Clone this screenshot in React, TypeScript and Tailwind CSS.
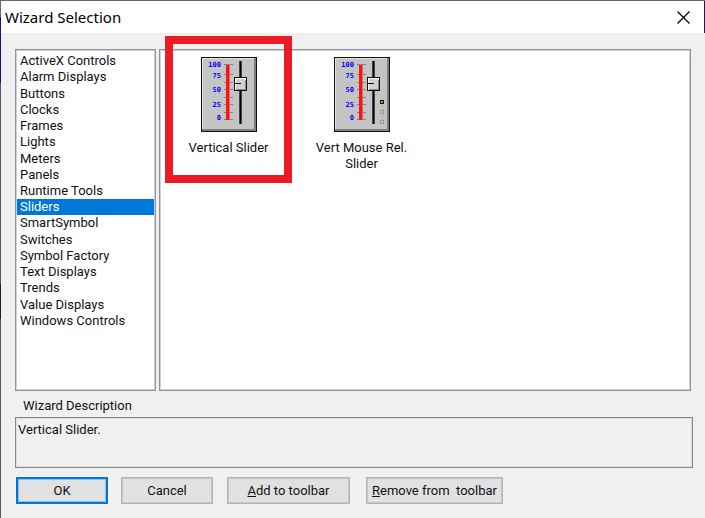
import React, { useState } from 'react';

const categories = [
    'ActiveX Controls',
    'Alarm Displays',
    'Buttons',
    'Clocks',
    'Frames',
    'Lights',
    'Meters',
    'Panels',
    'Runtime Tools',
    'Sliders',
    'SmartSymbol',
    'Switches',
    'Symbol Factory',
    'Text Displays',
    'Trends',
    'Value Displays',
    'Windows Controls',
];

const scale = [
    { value: '100', y: 10 },
    { value: '75', y: 21 },
    { value: '50', y: 35 },
    { value: '25', y: 50 },
    { value: '0', y: 63 },
];

const ticks = [7, 17, 25, 32, 40, 47, 55, 62];

function SliderIcon({ indicators = false }: { indicators?: boolean }) {
    return (
        <svg width="56" height="75" viewBox="0 0 56 75" shapeRendering="crispEdges" aria-hidden="true">
            <rect width="56" height="75" fill="#111" />
            <rect x="1" y="1" width="54" height="73" fill="#808080" />
            <rect x="1" y="1" width="52" height="71" fill="#e4e4e4" />
            <rect x="2" y="2" width="51" height="70" fill="#c4c4c4" />
            {ticks.map((y) => (
                <rect key={y} x="23" y={y} width="9" height="1" fill="#858585" />
            ))}
            <rect x="25" y="8" width="3" height="55" fill="#fa1410" />
            <rect x="28" y="8" width="1" height="55" fill="#dc6a66" />
            {scale.map(({ value, y }) => (
                <text
                    key={value}
                    x="20"
                    y={y}
                    textAnchor="end"
                    className="fill-[#0000ff] font-['DejaVu_Sans_Mono',monospace] text-[7px] font-bold"
                >
                    {value}
                </text>
            ))}
            <rect x="38" y="4" width="3" height="63" fill="#444" />
            <rect x="39" y="4" width="1" height="63" fill="#000" />
            <rect x="33" y="20" width="13" height="14" fill="#111" />
            <rect x="34" y="21" width="11" height="12" fill="#fafafa" />
            <rect x="35" y="23" width="10" height="10" fill="#8c8c8c" />
            <rect x="35" y="22" width="9" height="10" fill="#d0d0d0" />
            <rect x="34" y="26" width="6" height="1" fill="#111" />
            {indicators && (
                <g>
                    <path d="M48 44v22" stroke="#999" strokeDasharray="1 1" />
                    <rect x="46" y="43" width="4" height="4" fill="#111" />
                    <rect x="47" y="44" width="2" height="2" fill="#aaa000" />
                    <rect x="46" y="53" width="3" height="3" fill="#c4c4c4" stroke="#999" />
                    <rect x="46" y="63" width="3" height="3" fill="#c4c4c4" stroke="#999" />
                </g>
            )}
        </svg>
    );
}

const pane = 'border border-[#8f939e] bg-white inset-ring inset-ring-[#cfd1d8]';
const plainButton =
    'h-[27px] border border-[#b4b4b4] bg-[#e1e1e1] text-center whitespace-pre inset-ring inset-ring-[#c6c6c6]';

export default function App() {
    const [selected, setSelected] = useState('Sliders');

    return (
        <div className="flex min-h-screen border-t border-[#686868] bg-[#f0f0f0] font-['Roboto',sans-serif] text-[13px] leading-4 text-[#111]">
            <div className="flex w-px shrink-0 flex-col bg-[#55556a]">
                <div className="h-4 bg-[#686868]" />
                <div className="h-[66px] bg-[#16167a]" />
                <div className="mt-[201px] h-[35px] bg-[#202020]" />
            </div>

            <div className="flex min-w-0 flex-1 flex-col">
                <header className="flex h-8 items-center justify-between border-r border-[#16167a] bg-white pl-1 pr-[14px]">
                    <h1 className="font-['Noto_Sans',sans-serif] text-[15px] leading-5 text-black">Wizard Selection</h1>
                    <button type="button" aria-label="Close">
                        <svg width="13" height="13" viewBox="0 0 13 13" fill="none" stroke="#000" strokeWidth="1.2">
                            <path d="M.5.5l12 12M12.5.5l-12 12" />
                        </svg>
                    </button>
                </header>

                <main className="flex flex-col px-[14px] pt-4">
                    <div className="flex gap-[3px]">
                        <div className={pane + ' h-[342px] w-[141px] shrink-0 px-px py-0.5'}>
                            <ul className="grid h-[277px] auto-rows-fr pt-px">
                                {categories.map((name) => (
                                    <li key={name} className="flex">
                                        <button
                                            type="button"
                                            onClick={() => setSelected(name)}
                                            className={
                                                name === selected
                                                    ? 'w-full bg-[#0078d7] pl-[3px] text-left text-white'
                                                    : 'w-full pl-[3px] text-left'
                                            }
                                        >
                                            {name}
                                        </button>
                                    </li>
                                ))}
                            </ul>
                        </div>

                        <div className={pane + ' flex min-w-0 flex-1 items-start pl-0.5 pt-[7px]'}>
                            <button type="button" className="relative flex w-[133px] flex-col items-center gap-2">
                                <SliderIcon />
                                <span>Vertical Slider</span>
                                <span className="absolute -top-[21px] left-[3px] h-[147px] w-[127px] border-8 border-[#ed1c24]" />
                            </button>
                            <button type="button" className="flex w-[133px] flex-col items-center gap-2">
                                <SliderIcon indicators />
                                <span className="w-[100px]">Vert Mouse Rel. Slider</span>
                            </button>
                        </div>
                    </div>

                    <label htmlFor="description" className="mt-[7px] pl-2">
                        Wizard Description
                    </label>
                    <textarea
                        id="description"
                        readOnly
                        value="Vertical Slider."
                        className="mt-[3px] -mr-[2px] h-[51px] resize-none border border-[#868686] bg-[#f0f0f0] px-0.5 py-1 outline-none inset-ring inset-ring-[#dcdcdc]"
                    />

                    <div className="mt-[9px] flex pl-px">
                        <button
                            type="button"
                            className="h-[27px] w-[92px] border-2 border-[#0078d7] bg-[#e1e1e1] inset-ring inset-ring-[#8cc0ea]"
                        >
                            OK
                        </button>
                        <button type="button" className={plainButton + ' ml-[13px] w-[92px]'}>
                            Cancel
                        </button>
                        <button type="button" className={plainButton + ' ml-[14px] w-[123px]'}>
                            <u>A</u>dd to toolbar
                        </button>
                        <button type="button" className={plainButton + ' ml-4 w-[137px]'}>
                            <u>R</u>emove from{'  '}toolbar
                        </button>
                    </div>
                </main>
            </div>
        </div>
    );
}
